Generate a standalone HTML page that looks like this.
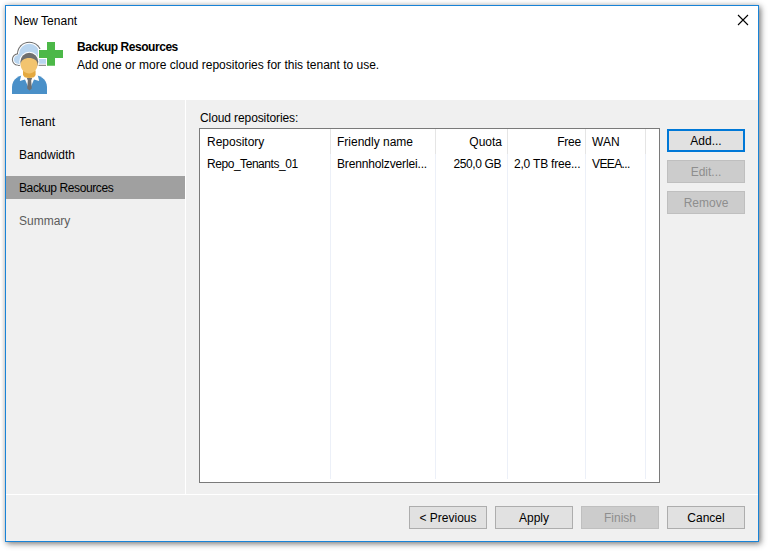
<!DOCTYPE html>
<html><head><meta charset="utf-8">
<style>
html,body{margin:0;padding:0;background:#fff;width:768px;height:551px;overflow:hidden;}
body{font-family:"Liberation Sans",sans-serif;font-size:12px;color:#000;position:relative;}
.a{position:absolute;white-space:nowrap;line-height:14px;}
#win{position:absolute;left:5px;top:5px;width:752px;height:535px;border:1px solid #1883d7;background:#fff;
 box-shadow:0 0 5px rgba(0,0,0,.16), 2px 2px 6px rgba(0,0,0,.45);}
#body{position:absolute;left:6px;top:100px;width:752px;height:441px;background:#f0f0f0;}
.vl{position:absolute;background:#e5e5e5;width:1px;}
.btn{position:absolute;width:76px;height:21px;border:1px solid #adadad;background:#e1e1e1;text-align:center;line-height:22px;}
.btn.dis{background:#cccccc;border-color:#bfbfbf;color:#8e8e8e;}
.btn.def{border:2px solid #0078d7;width:74px;height:19px;line-height:20px;}
</style></head><body>
<div id="win"></div>
<div id="body"></div>

<!-- title -->
<div class="a" style="left:14px;top:14px;">New Tenant</div>
<svg class="a" style="left:737px;top:14px;" width="12" height="12" viewBox="0 0 12 12"><path d="M1 1L11 11M11 1L1 11" stroke="#000" stroke-width="1.1" fill="none"/></svg>

<!-- header icon -->
<svg class="a" style="left:0;top:0;" width="70" height="100" viewBox="0 0 70 100">
  <defs><clipPath id="cc"><rect x="0" y="0" width="70" height="65.8"/></clipPath></defs>
  <g clip-path="url(#cc)">
    <g fill="#6b6b6b"><circle cx="29.3" cy="54" r="12.3"/><circle cx="18.2" cy="59.5" r="6.3"/><rect x="18" y="54" width="29" height="12"/></g>
  </g>
  <g fill="#fff"><circle cx="29.3" cy="54" r="11.3"/><circle cx="18.2" cy="59.5" r="5.3"/><rect x="18" y="54" width="29" height="10.8"/></g>
  <g fill="#b9d5ef"><circle cx="29.3" cy="54" r="10.3"/><circle cx="18.2" cy="59.5" r="4.3"/><rect x="18" y="54" width="29" height="9.8"/></g>
  <!-- plus -->
  <path d="M47 42H55V50H63V58H55V65.8H47V58H39V50H47Z" fill="#4cb848" stroke="#fff" stroke-width="2" paint-order="stroke"/>
  <!-- hair -->
  <circle cx="29.3" cy="61.8" r="10" fill="#fff"/>
  <circle cx="29.3" cy="61.8" r="9" fill="#6f6f6f"/>
  <!-- body -->
  <path d="M12 94V87C12 79 19 74.2 29.5 74.2C40 74.2 47 79 47 87V94Z" fill="#4a90c8"/>
  <path d="M21.5 74.2L19.8 81L25 79.5L29.5 90L34 79.5L39.2 81L37.5 74.2Z" fill="#fff"/>
  <!-- beard/neck -->
  <path d="M23 70.5H35.6V74.5Q35.2 78 29.3 78Q23.4 78 23 74.5Z" fill="#e4a940"/>
  <!-- face -->
  <path d="M20.6 64.5C20.6 60.3 24.4 58 29.1 58C33.8 58 37.5 60.3 37.5 64.5C37.5 69.5 33.5 73.5 29.1 73.5C24.7 73.5 20.6 69.5 20.6 64.5Z" fill="#f2c46f"/>
  <!-- tie -->
  <path d="M26.8 78H32.2L31.2 80.5L31.8 88.5L29.5 90.5L27.2 88.5L27.8 80.5Z" fill="#707070"/>
</svg>

<div class="a" style="left:77px;top:40px;font-weight:bold;letter-spacing:-0.45px;">Backup Resources</div>
<div class="a" style="left:77px;top:58px;">Add one or more cloud repositories for this tenant to use.</div>

<!-- nav -->
<div style="position:absolute;left:185px;top:100px;width:1px;height:394px;background:#fff;"></div>
<div style="position:absolute;left:6px;top:176px;width:179px;height:23px;background:#a0a0a0;"></div>
<div class="a" style="left:19px;top:115px;">Tenant</div>
<div class="a" style="left:19px;top:148px;">Bandwidth</div>
<div class="a" style="left:19px;top:181px;letter-spacing:-0.4px;">Backup Resources</div>
<div class="a" style="left:19px;top:214px;color:#5c5c5c;">Summary</div>

<!-- content -->
<div class="a" style="left:200px;top:111px;letter-spacing:-0.1px;">Cloud repositories:</div>
<div style="position:absolute;left:199px;top:128px;width:459px;height:353px;border:1px solid #7a7a7a;background:#fff;"></div>
<div class="vl" style="left:330px;top:129px;height:25px;"></div><div class="vl" style="left:330px;top:154px;height:325px;background:#ecf0f8;"></div>
<div class="vl" style="left:435px;top:129px;height:25px;"></div><div class="vl" style="left:435px;top:154px;height:325px;background:#ecf0f8;"></div>
<div class="vl" style="left:507px;top:129px;height:25px;"></div><div class="vl" style="left:507px;top:154px;height:325px;background:#ecf0f8;"></div>
<div class="vl" style="left:585px;top:129px;height:25px;"></div><div class="vl" style="left:585px;top:154px;height:325px;background:#ecf0f8;"></div>
<div class="vl" style="left:645px;top:129px;height:25px;"></div><div class="vl" style="left:645px;top:154px;height:325px;background:#ecf0f8;"></div>

<div class="a" style="left:207px;top:135px;">Repository</div>
<div class="a" style="left:337px;top:135px;">Friendly name</div>
<div class="a" style="left:436px;top:135px;width:66px;text-align:right;">Quota</div>
<div class="a" style="left:508px;top:135px;width:73px;text-align:right;letter-spacing:-0.2px;">Free</div>
<div class="a" style="left:592px;top:135px;">WAN</div>

<div class="a" style="left:207px;top:157px;letter-spacing:-0.45px;">Repo_Tenants_01</div>
<div class="a" style="left:337px;top:157px;letter-spacing:-0.15px;">Brennholzverlei...</div>
<div class="a" style="left:436px;top:157px;width:65px;text-align:right;letter-spacing:-0.4px;">250,0 GB</div>
<div class="a" style="left:514px;top:157px;letter-spacing:-0.2px;">2,0 TB free...</div>
<div class="a" style="left:592px;top:157px;letter-spacing:-0.6px;">VEEA...</div>

<!-- right buttons -->
<div class="btn def" style="left:667px;top:129px;">Add...</div>
<div class="btn dis" style="left:667px;top:160px;">Edit...</div>
<div class="btn dis" style="left:667px;top:191px;">Remove</div>

<!-- separator -->
<div style="position:absolute;left:6px;top:494px;width:752px;height:1px;background:#fff;"></div>

<!-- bottom buttons -->
<div class="btn" style="left:409px;top:506px;">&lt; Previous</div>
<div class="btn" style="left:495px;top:506px;">Apply</div>
<div class="btn dis" style="left:581px;top:506px;">Finish</div>
<div class="btn" style="left:667px;top:506px;">Cancel</div>
</body></html>
